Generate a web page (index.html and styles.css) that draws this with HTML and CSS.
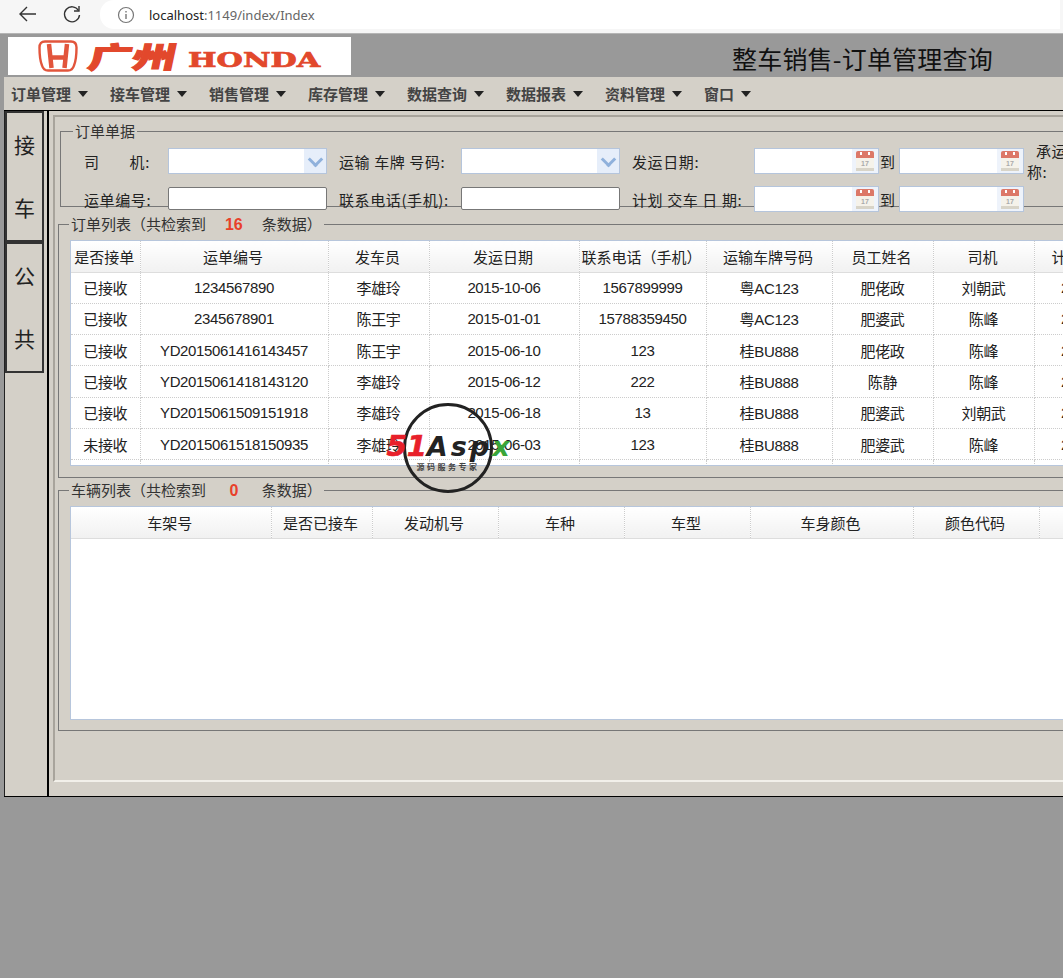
FILE: index.html
```html
<!DOCTYPE html>
<html lang="zh-CN">
<head>
    <meta charset="UTF-8">
    <title>整车销售-订单管理查询</title>
    <link rel="stylesheet" href="styles.css">
</head>
<body>
    <div class="browser-bar">
        <svg class="nav-icon back" width="20" height="20" viewBox="0 0 20 20"><path d="M18 10H2M9 3l-7 7 7 7" fill="none" stroke="#333" stroke-width="1.4"/></svg>
        <svg class="nav-icon reload" width="20" height="20" viewBox="0 0 20 20"><path d="M16.5 6.5A7.5 7.5 0 1 0 17.5 11" fill="none" stroke="#333" stroke-width="1.4"/><path d="M17 2v5h-5" fill="none" stroke="#333" stroke-width="1.4"/></svg>
        <div class="address">
            <svg width="18" height="18" viewBox="0 0 18 18"><circle cx="9" cy="9" r="7.5" fill="none" stroke="#777" stroke-width="1.2"/><path d="M9 8v5M9 5v1.6" stroke="#777" stroke-width="1.4"/></svg>
            <span class="host">localhost</span><span class="path">:1149/index/Index</span>
        </div>
    </div>

    <div class="page-head">
        <div class="logo">
            <svg class="logo-h" width="40" height="32" viewBox="0 0 40 32">
                <path d="M7 1.500h26q5.500 0 5.500 6 0 12-2.500 18-1.500 5-6 5H10q-4.500 0-6-5Q1.500 19.500 1.500 7.500q0-6 5.500-6z" fill="none" stroke="#e2553c" stroke-width="2.400"/>
                <path d="M11 4l2.500 24M29 4l-2.500 24M12.500 17.500h15" fill="none" stroke="#e2553c" stroke-width="4.500"/>
            </svg>
            <span class="logo-cn">广州</span>
            <span class="logo-en">HONDA</span>
        </div>
        <h1 class="page-title">整车销售-订单管理查询</h1>
    </div>

    <div class="app">
        <ul class="menu">
            <li>订单管理</li>
            <li>接车管理</li>
            <li>销售管理</li>
            <li>库存管理</li>
            <li>数据查询</li>
            <li>数据报表</li>
            <li>资料管理</li>
            <li class="short">窗口</li>
        </ul>

        <div class="work">
            <div class="side">
                <div class="side-tab"><span>接</span><span>车</span></div>
                <div class="side-tab"><span>公</span><span>共</span></div>
            </div>

            <div class="main">
                <div class="main-inner">
                    <fieldset class="box form-box">
                        <legend>订单单据</legend>
                        <div class="form-row">
                            <label class="w-driver">司<i></i>机:</label>
                            <div class="combo"><b></b></div>
                            <label class="w-plate">运输 车牌 号码:</label>
                            <div class="combo"><b></b></div>
                            <label class="w-date">发运日期:</label>
                            <div class="date"><b></b></div>
                            <em>到</em>
                            <div class="date"><b></b></div>
                            <label class="carrier"><span>承运</span>称:</label>
                        </div>
                        <div class="form-row row-two">
                            <label class="w-driver">运单编号:</label>
                            <div class="text-input"></div>
                            <label class="w-plate">联系电话(手机):</label>
                            <div class="text-input"></div>
                            <label class="w-date">计划 交车 日 期:</label>
                            <div class="date"><b></b></div>
                            <em>到</em>
                            <div class="date"><b></b></div>
                        </div>
                    </fieldset>

                    <fieldset class="box list-box">
                        <legend>订单列表（共检索到 <strong>16</strong> 条数据）</legend>
                        <div class="grid orders">
                            <table>
                                <colgroup>
                                    <col class="c69"><col class="c188"><col class="c101"><col class="c150"><col class="c127"><col class="c126"><col class="c101"><col class="c101"><col class="c127">
                                </colgroup>
                                <thead>
                                    <tr><th>是否接单</th><th>运单编号</th><th>发车员</th><th>发运日期</th><th>联系电话（手机）</th><th>运输车牌号码</th><th>员工姓名</th><th>司机</th><th>计划交车日期</th></tr>
                                </thead>
                                <tbody>
                                    <tr><td>已接收</td><td>1234567890</td><td>李雄玲</td><td>2015-10-06</td><td>1567899999</td><td>粤AC123</td><td>肥佬政</td><td>刘朝武</td><td>2015-10-08</td></tr>
                                    <tr><td>已接收</td><td>2345678901</td><td>陈王宇</td><td>2015-01-01</td><td>15788359450</td><td>粤AC123</td><td>肥婆武</td><td>陈峰</td><td>2015-01-03</td></tr>
                                    <tr><td>已接收</td><td>YD2015061416143457</td><td>陈王宇</td><td>2015-06-10</td><td>123</td><td>桂BU888</td><td>肥佬政</td><td>陈峰</td><td>2015-06-12</td></tr>
                                    <tr><td>已接收</td><td>YD2015061418143120</td><td>李雄玲</td><td>2015-06-12</td><td>222</td><td>桂BU888</td><td>陈静</td><td>陈峰</td><td>2015-06-14</td></tr>
                                    <tr><td>已接收</td><td>YD2015061509151918</td><td>李雄玲</td><td>2015-06-18</td><td>13</td><td>桂BU888</td><td>肥婆武</td><td>刘朝武</td><td>2015-06-20</td></tr>
                                    <tr><td>未接收</td><td>YD2015061518150935</td><td>李雄玲</td><td>2015-06-03</td><td>123</td><td>桂BU888</td><td>肥婆武</td><td>陈峰</td><td>2015-06-05</td></tr>
                                    <tr><td></td><td></td><td></td><td></td><td></td><td></td><td></td><td></td><td></td></tr>
                                </tbody>
                            </table>
                        </div>
                    </fieldset>

                    <fieldset class="box list-box cars-box">
                        <legend>车辆列表（共检索到 <strong class="zero">0</strong> 条数据）</legend>
                        <div class="grid cars">
                            <table>
                                <colgroup>
                                    <col class="c200"><col class="c101"><col class="c126"><col class="c126"><col class="c126"><col class="c163"><col class="c126"><col class="c100">
                                </colgroup>
                                <thead>
                                    <tr><th>车架号</th><th>是否已接车</th><th>发动机号</th><th>车种</th><th>车型</th><th>车身颜色</th><th>颜色代码</th><th></th></tr>
                                </thead>
                            </table>
                        </div>
                    </fieldset>
                </div>
            </div>
        </div>
    </div>

    <div class="stamp">
        <div class="stamp-logo"><span class="red">51</span>Asp<span class="green">x</span></div>
        <div class="stamp-sub">源码服务专家</div>
    </div>
</body>
</html>
```

FILE: styles.css
```css
* {
    box-sizing: border-box;
}
html, body {
    margin: 0;
    height: 100%;
}
body {
    background-color: #999999;
    font-family: "Liberation Sans", "Noto Sans CJK SC", sans-serif;
    font-size: 15px;
    color: #222;
    overflow: hidden;
    position: relative;
}

/* browser chrome */
.browser-bar {
    height: 34px;
    background-color: #f6f6f6;
    border-bottom: 1px solid #b5b5b5;
    display: flex;
    align-items: flex-start;
    padding: 4px 0 0 18px;
}
.nav-icon {
    flex: none;
}
.reload {
    margin-left: 24px;
}
.address {
    margin: -4px 0 0 18px;
    width: 960px;
    height: 29px;
    background-color: #fff;
    border-radius: 14px 0 0 14px;
    display: flex;
    align-items: center;
    padding-left: 17px;
    font-family: "Noto Sans", sans-serif;
    font-size: 13px;
}
.address svg {
    margin-right: 14px;
}
.host {
    color: #222;
}
.path {
    color: #666;
}

/* header */
.page-head {
    height: 43px;
    display: flex;
    padding: 3px 0 0 8px;
}
.logo {
    width: 343px;
    height: 38px;
    background-color: #fff;
    color: #e2482c;
    display: flex;
    align-items: center;
    overflow: hidden;
}
.logo-h {
    margin-left: 30px;
    flex: none;
}
.logo-cn {
    font-family: "Noto Sans CJK SC", sans-serif;
    font-size: 29px;
    font-weight: 900;
    line-height: 34px;
    margin: -3px 0 0 11px;
    width: 86px;
    white-space: nowrap;
    -webkit-text-stroke: 1px #e2482c;
    transform-origin: left center;
    transform: scaleX(1.52) skewX(-8deg);
}
.logo-en {
    font-family: "DejaVu Serif", serif;
    font-size: 21px;
    font-weight: 700;
    margin-left: 13px;
    padding-top: 6px;
    -webkit-text-stroke: .7px #e2482c;
    transform-origin: left center;
    transform: scaleX(1.44);
}
.page-title {
    margin: 3px 0 0 381px;
    font-family: "Noto Sans CJK SC", sans-serif;
    font-size: 25px;
    font-weight: 400;
    letter-spacing: .2px;
    line-height: 36px;
    color: #111;
    white-space: nowrap;
}

/* app frame */
.app {
    margin-left: 4px;
    width: 1200px;
    height: 720px;
    background-color: #d4d0c8;
    border-bottom: 1px solid #000;
    display: flex;
    flex-direction: column;
}
.menu {
    margin: 0;
    padding: 0 0 0 7px;
    list-style: none;
    height: 34px;
    border-bottom: 1px solid #000;
    display: flex;
    align-items: center;
    flex: none;
}
.menu li {
    width: 99px;
    font-family: "Noto Sans CJK SC", sans-serif;
    font-size: 15px;
    font-weight: 700;
    color: #444;
    display: flex;
    align-items: center;
}
.menu li.short {
    width: 60px;
}
.menu li::after {
    content: "";
    margin-left: 7px;
    border-left: 5.500px solid transparent;
    border-right: 5.500px solid transparent;
    border-top: 6px solid #222;
}
.work {
    flex: 1;
    display: flex;
    min-height: 0;
}
.side {
    width: 44px;
    border-left: 1px solid #222;
    border-right: 1px solid #000;
    flex: none;
}
.side-tab {
    width: 39px;
    height: 131px;
    border: 2px solid #333;
    display: flex;
    flex-direction: column;
    align-items: center;
    justify-content: space-around;
    padding: 0 0 2px;
    font-family: "Noto Sans CJK SC", sans-serif;
    font-size: 21px;
    color: #222;
}
.main {
    flex: 1;
    border-left: 1px solid #000;
    padding: 4px 0 0 4px;
    min-width: 0;
}
.main-inner {
    height: 667px;
    border-top: 2px solid #a8a49c;
    border-left: 2px solid #a8a49c;
    border-bottom: 2px solid #f2f0ea;
    padding: 0 0 0 3px;
}

/* fieldsets */
.box {
    margin: 0;
    padding: 0;
    border: 1px solid #777;
    border-right: none;
    min-width: 0;
}
.box legend {
    padding: 0 2px;
    margin-left: 10px;
    font-family: "Noto Sans CJK SC", sans-serif;
    font-size: 15px;
    line-height: 16px;
    color: #333;
    white-space: pre;
}
.box legend strong {
    display: inline-block;
    width: 49px;
    text-align: center;
    color: #e8402a;
    font-family: "Liberation Sans", sans-serif;
    font-size: 16px;
    font-weight: 700;
}
.form-box {
    margin-top: 6px;
    margin-left: 2px;
    height: 84px;
}
.form-box legend {
    margin-left: 12px;
}
.form-row {
    display: flex;
    align-items: center;
    height: 26px;
    margin-top: 9px;
    white-space: nowrap;
    color: #222;
    font-family: "Noto Sans CJK SC", sans-serif;
}
.row-two {
    margin-top: 12px;
}
.form-row label {
    display: block;
    flex: none;
    letter-spacing: .6px;
}
.w-driver {
    width: 107px;
    padding-left: 23px;
}
.w-driver i {
    display: inline-block;
    width: 30px;
}
.w-plate {
    width: 134px;
    padding-left: 12px;
}
.w-date {
    width: 134px;
    padding-left: 12px;
}
.combo, .date, .text-input {
    height: 26px;
    background-color: #fff;
    border: 1px solid #b5c5dc;
    flex: none;
    position: relative;
}
.combo {
    width: 159px;
}
.combo b {
    position: absolute;
    right: 0;
    top: 0;
    bottom: 0;
    width: 22px;
    background-color: #e6eefa;
}
.combo b::after {
    content: "";
    position: absolute;
    left: 6px;
    top: 5px;
    width: 8px;
    height: 8px;
    border-right: 3px solid #8fb1dc;
    border-bottom: 3px solid #8fb1dc;
    transform: rotate(45deg);
}
.text-input {
    width: 159px;
    height: 23px;
    margin-top: -2px;
    border: 1px solid #777;
    border-radius: 2px;
}
.date {
    width: 125px;
}
.date b {
    position: absolute;
    right: 0;
    top: 0;
    bottom: 0;
    width: 26px;
    background-color: #eef3fb;
}
.date b::before {
    content: "";
    position: absolute;
    left: 4px;
    top: 2px;
    width: 18px;
    height: 20px;
    border-radius: 2px 2px 0 0;
    background:
        linear-gradient(#fff, #fff) 4px 1px / 2px 3px no-repeat,
        linear-gradient(#fff, #fff) 12px 1px / 2px 3px no-repeat,
        linear-gradient(#dc7868 0 7px, #f5f2ea 7px, #f5f2ea 17px, #d8d4c8 17px);
}
.date b::after {
    content: "17";
    position: absolute;
    left: 4px;
    width: 18px;
    top: 11px;
    font-family: "Liberation Sans", sans-serif;
    font-size: 7px;
    line-height: 8px;
    text-align: center;
    color: #aaa;
}
.form-row em {
    font-style: normal;
    width: 20px;
    padding-left: 1px;
    flex: none;
}
.carrier {
    width: 60px;
    line-height: 21px;
    white-space: normal;
    margin-left: 3px;
    margin-top: -1px;
}
.carrier span {
    display: block;
    padding-left: 9px;
}

/* grids */
.form-box + .list-box {
    margin-top: 9px;
    height: 262px;
}
.cars-box {
    margin-top: 4px;
    height: 249px;
}
.grid {
    margin: 7px 0 0 11px;
    border: 1px solid #b7c6dc;
    background-color: #fff;
    overflow: hidden;
}
.orders {
    height: 226px;
}
.cars {
    height: 214px;
}
.grid table {
    border-collapse: collapse;
    table-layout: fixed;
}
.orders table {
    width: 1090px;
}
.cars table {
    width: 1068px;
}
.c69 { width: 69px; }
.c100 { width: 100px; }
.c101 { width: 101px; }
.c126 { width: 126px; }
.c127 { width: 127px; }
.c150 { width: 150px; }
.c163 { width: 163px; }
.c188 { width: 188px; }
.c200 { width: 200px; }
.grid th {
    height: 31px;
    padding: 0 2px 0 0;
    font-weight: 400;
    color: #222;
    background: linear-gradient(#ffffff, #f1f1f1);
    border-right: 1px dotted #ccc;
    border-bottom: 1px solid #ddd;
    white-space: nowrap;
    overflow: hidden;
    font-family: "Noto Sans CJK SC", sans-serif;
}
.grid td {
    height: 31.300px;
    padding: 0;
    text-align: center;
    color: #222;
    letter-spacing: -.35px;
    border-right: 1px dotted #ccc;
    border-bottom: 1px dotted #ccc;
    white-space: nowrap;
    overflow: hidden;
}

/* watermark */
.stamp {
    position: absolute;
    left: 403px;
    top: 403px;
    width: 90px;
    height: 90px;
    border: 3px solid #222;
    border-radius: 50%;
    display: flex;
    flex-direction: column;
    align-items: center;
    pointer-events: none;
}
.stamp-logo {
    margin-top: 24px;
    font-family: "DejaVu Sans", sans-serif;
    font-size: 27px;
    line-height: 32px;
    font-weight: 700;
    font-style: italic;
    letter-spacing: 3px;
    color: #222;
    white-space: nowrap;
}
.stamp-logo .red {
    font-size: 29px;
    letter-spacing: 0;
    color: #e8202a;
    -webkit-text-stroke: .6px #e8202a;
}
.stamp-logo .green {
    letter-spacing: 0;
    color: #3aa53a;
}
.stamp-sub {
    margin-top: -1px;
    font-family: "Noto Sans CJK SC", sans-serif;
    font-size: 8px;
    font-weight: 700;
    letter-spacing: 2.500px;
    line-height: 10px;
    color: #444;
    white-space: nowrap;
}
```
